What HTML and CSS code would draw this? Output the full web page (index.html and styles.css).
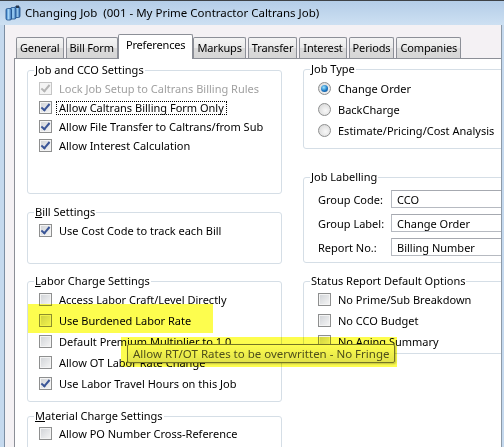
FILE: index.html
```html
<!DOCTYPE html>
<html lang="en">
<head>
	<meta charset="UTF-8">
	<title>Changing Job</title>
	<link rel="stylesheet" href="styles.css">
</head>
<body>
<div class="window">
	<div class="titlebar">
		<svg class="app-icon" width="16" height="16" viewBox="0 0 16 16">
			<defs>
				<linearGradient id="cyl" x1="0" x2="1">
					<stop offset="0" stop-color="#2b73c4"/>
					<stop offset="0.45" stop-color="#a7d6f7"/>
					<stop offset="1" stop-color="#2a66b0"/>
				</linearGradient>
			</defs>
			<rect x="9.5" y="1.5" width="5.5" height="11" rx="1.5" fill="url(#cyl)" stroke="#1d4c86" stroke-width="0.8"/>
			<rect x="5.5" y="2.5" width="5.5" height="11.5" rx="1.5" fill="url(#cyl)" stroke="#1d4c86" stroke-width="0.8"/>
			<rect x="1" y="3.5" width="5.5" height="11.5" rx="1.5" fill="url(#cyl)" stroke="#1d4c86" stroke-width="0.8"/>
			<rect x="11" y="0.5" width="3" height="2.5" fill="#26364e"/>
		</svg>
		<span class="title">Changing Job&nbsp; (001 - My Prime Contractor Caltrans Job)</span>
	</div>
	<div class="client">
		<div class="tabs">
			<span class="tab">General</span>
			<span class="tab">Bill Form</span>
			<span class="tab active">Preferences</span>
			<span class="tab">Markups</span>
			<span class="tab">Transfer</span>
			<span class="tab">Interest</span>
			<span class="tab">Periods</span>
			<span class="tab">Companies</span>
		</div>
		<div class="panel">
			<div class="col col-left">
				<fieldset class="group g-job">
					<legend><u>J</u>ob and CCO Settings</legend>
					<label class="check disabled"><span class="box on"></span><span class="text">Lock Job Setup to Caltrans Billing Rules</span></label>
					<label class="check"><span class="box on"></span><span class="text focus">Allow Caltrans Billing Form Only</span></label>
					<label class="check"><span class="box on"></span><span class="text">Allow File Transfer to Caltrans/from Sub</span></label>
					<label class="check"><span class="box on"></span><span class="text">Allow Interest Calculation</span></label>
				</fieldset>
				<fieldset class="group g-bill">
					<legend><u>B</u>ill Settings</legend>
					<label class="check"><span class="box on"></span><span class="text">Use Cost Code to track each Bill</span></label>
				</fieldset>
				<fieldset class="group g-labor">
					<legend><u>L</u>abor Charge Settings</legend>
					<label class="check"><span class="box"></span><span class="text">Access Labor Craft/Level Directly</span></label>
					<label class="check"><span class="box"></span><span class="text">Use Burdened Labor Rate</span></label>
					<label class="check"><span class="box"></span><span class="text">Default Premium Multiplier to 1.0</span></label>
					<label class="check"><span class="box"></span><span class="text">Allow OT Labor Rate Change</span></label>
					<label class="check"><span class="box on"></span><span class="text">Use Labor Travel Hours on this Job</span></label>
				</fieldset>
				<fieldset class="group g-material">
					<legend><u>M</u>aterial Charge Settings</legend>
					<label class="check"><span class="box"></span><span class="text">Allow PO Number Cross-Reference</span></label>
				</fieldset>
			</div>
			<div class="col col-right">
				<fieldset class="group g-type">
					<legend>Job Type</legend>
					<label class="check"><span class="radio on"></span><span class="text">Change Order</span></label>
					<label class="check"><span class="radio"></span><span class="text">BackCharge</span></label>
					<label class="check"><span class="radio"></span><span class="text">Estimate/Pricing/Cost Analysis</span></label>
				</fieldset>
				<fieldset class="group g-label">
					<legend>Job Labelling</legend>
					<div class="field-row"><span class="field-name">Group Code:</span><input class="field" value="CCO" readonly></div>
					<div class="field-row"><span class="field-name">Group Label:</span><input class="field" value="Change Order" readonly></div>
					<div class="field-row"><span class="field-name">Report No.:</span><input class="field" value="Billing Number" readonly></div>
				</fieldset>
				<fieldset class="group g-status">
					<legend>Status Report Default Options</legend>
					<label class="check"><span class="box"></span><span class="text">No Prime/Sub Breakdown</span></label>
					<label class="check"><span class="box"></span><span class="text">No CCO Budget</span></label>
					<label class="check"><span class="box"></span><span class="text">No Aging Summary</span></label>
				</fieldset>
			</div>
		</div>
	</div>
	<div class="mark mark-rate"></div>
	<div class="tooltip">Allow RT/OT Rates to be overwritten - No Fringe</div>
	<div class="mark mark-tip"></div>
</div>
</body>
</html>
```

FILE: styles.css
```css
body {
	margin: 0;
	font-family: "Noto Sans", "DejaVu Sans", sans-serif;
	font-size: 11px;
	color: #000;
}

.window {
	position: relative;
	width: 504px;
	height: 447px;
	box-sizing: border-box;
	border-top: 1px solid #3e4247;
	background: #c5d9ee;
	display: flex;
	flex-direction: column;
	overflow: hidden;
}

.titlebar {
	height: 24px;
	flex-shrink: 0;
	display: flex;
	align-items: center;
	padding-left: 5px;
	background: linear-gradient(#b4cde8, #cde0f2);
}

.app-icon {
	margin-right: 4px;
}

.title {
	font-size: 11.5px;
	line-height: 14px;
}

.client {
	flex: 1;
	margin: 0 2px 0 4px;
	border-left: 1px solid #7c8ea3;
	border-right: 1px solid #8d9aa8;
	background: #f4f1f4;
	overflow: hidden;
}

.tabs {
	position: relative;
	z-index: 1;
	height: 33px;
	box-sizing: border-box;
	display: flex;
	align-items: flex-end;
	gap: 2px;
	padding-left: 11px;
}

.tab {
	height: 21px;
	box-sizing: border-box;
	padding: 0 3px;
	border: 1px solid #8c8f97;
	border-bottom: none;
	border-radius: 2px 2px 0 0;
	line-height: 20px;
	letter-spacing: -0.15px;
	white-space: nowrap;
	background: linear-gradient(#f4f4f4 0%, #eaeaea 50%, #dadada 51%, #d6d6d6 100%);
}

.tab.active {
	height: 25px;
	margin: 0 -2px -1px;
	padding: 0 7px;
	background: #fff;
}

.panel {
	width: 540px;
	height: 420px;
	margin-left: 9px;
	padding: 4px 0 0 12px;
	box-sizing: border-box;
	border: 1px solid #8c8f97;
	background: #fff;
	display: flex;
	align-items: flex-start;
	gap: 21px;
}

.col {
	display: flex;
	flex-direction: column;
}

.col-left {
	width: 255px;
}

.col-right {
	width: 230px;
	margin-top: -1px;
}

.group {
	margin: 0;
	min-width: 0;
	border: 1px solid #d5dee6;
	border-radius: 3px;
	padding: 2px 8px 0 11px;
}

.group legend {
	margin-left: -5px;
	padding: 0 1px;
	line-height: 14px;
}

.col-right .group {
	padding-left: 14px;
}

.col-right .group legend {
	margin-left: -8px;
}

.g-job {
	padding-bottom: 38px;
}

.g-bill {
	margin-top: 11px;
	padding-bottom: 23px;
}

.g-labor {
	margin-top: 10px;
	padding-top: 1px;
	padding-bottom: 7px;
}

.g-labor .check,
.g-status .check,
.g-type .check {
	height: 21px;
}

.g-material {
	margin-top: 7px;
	padding-top: 1px;
	padding-bottom: 20px;
}

.g-type {
	padding-bottom: 7px;
}

.g-label {
	margin-top: 21px;
	padding-top: 6px;
	padding-bottom: 6px;
}

.g-status {
	margin-top: 11px;
	padding-top: 1px;
	padding-bottom: 1px;
}

.check {
	display: flex;
	align-items: center;
	height: 19px;
	white-space: nowrap;
}

.check .text {
	line-height: 12px;
	padding: 0 2px;
	border: 1px solid transparent;
}

.check .text.focus {
	border: 1px dotted #000;
}

.check.disabled .text {
	color: #a0a0a0;
}

.box,
.radio {
	position: relative;
	flex-shrink: 0;
	width: 13px;
	height: 13px;
	box-sizing: border-box;
	margin-right: 4px;
	border: 1px solid #8e8f8f;
	background: linear-gradient(135deg, #cfd2d6, #f6f6f6);
	box-shadow: inset 0 0 0 1px #f4f4f4;
}

.box.on::after {
	content: "";
	position: absolute;
	left: 3px;
	top: 0;
	width: 3px;
	height: 7px;
	border: solid #3a5597;
	border-width: 0 2px 2px 0;
	transform: rotate(40deg);
}

.check.disabled .box {
	border-color: #c4c4c4;
	background: #f4f4f4;
}

.check.disabled .box::after {
	border-color: #b4b4b4;
}

.radio {
	border-radius: 50%;
	background: radial-gradient(circle at 60% 60%, #f8f8f8, #d3d3d3);
	box-shadow: none;
}

.radio.on::after {
	content: "";
	position: absolute;
	left: 2px;
	top: 2px;
	width: 7px;
	height: 7px;
	border-radius: 50%;
	background: radial-gradient(circle at 40% 35%, #9fe6ff, #1b78c4 55%, #0b3e7c);
}

.field-row {
	display: flex;
	align-items: center;
	height: 18px;
	margin-bottom: 6px;
}

.field-row:last-child {
	margin-bottom: 0;
}

.field-name {
	width: 73px;
	flex-shrink: 0;
}

.field {
	width: 140px;
	height: 18px;
	box-sizing: border-box;
	margin: 0;
	padding: 0 5px;
	border: 1px solid #b6bac1;
	border-top-color: #a6a9b0;
	font: inherit;
	color: #000;
	outline: none;
}

.mark {
	position: absolute;
	background: #fdfd4e;
	mix-blend-mode: multiply;
}

.mark-rate {
	left: 28px;
	top: 303px;
	width: 185px;
	height: 29px;
}

.mark-tip {
	left: 121px;
	top: 336px;
	width: 276px;
	height: 30px;
}

.tooltip {
	position: absolute;
	left: 127px;
	top: 343px;
	width: 268px;
	height: 19px;
	box-sizing: border-box;
	padding-left: 5px;
	border: 1px solid #767676;
	border-radius: 2px;
	background: linear-gradient(#ffffff, #e4e5f0);
	box-shadow: 1px 1px 2px rgba(0, 0, 0, 0.25);
	color: #4f4f4f;
	font-size: 11.5px;
	line-height: 17px;
	white-space: nowrap;
}
```
